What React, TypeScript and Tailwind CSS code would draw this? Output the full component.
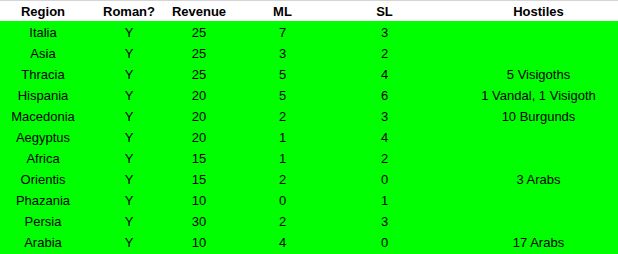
import React from "react";

const rows: [string, string, string, string, string, string][] = [
  ["Italia", "Y", "25", "7", "3", ""],
  ["Asia", "Y", "25", "3", "2", ""],
  ["Thracia", "Y", "25", "5", "4", "5 Visigoths"],
  ["Hispania", "Y", "20", "5", "6", "1 Vandal, 1 Visigoth"],
  ["Macedonia", "Y", "20", "2", "3", "10 Burgunds"],
  ["Aegyptus", "Y", "20", "1", "4", ""],
  ["Africa", "Y", "15", "1", "2", ""],
  ["Orientis", "Y", "15", "2", "0", "3 Arabs"],
  ["Phazania", "Y", "10", "0", "1", ""],
  ["Persia", "Y", "30", "2", "3", ""],
  ["Arabia", "Y", "10", "4", "0", "17 Arabs"],
];

const headers = ["Region", "Roman?", "Revenue", "ML", "SL", "Hostiles"];
const cols = "grid grid-cols-[86px_86px_54px_113px_91px_217px]";

export default function App() {
  return (
    <div
      className="w-[618px] h-[254px] overflow-hidden bg-[#00ff00] text-[13px] leading-none text-black"
      style={{ fontFamily: '"Liberation Sans", Arial, sans-serif' }}
    >
      <div className="w-[647px]">
        <div className={`${cols} h-[21px] bg-white border-t border-[#d4d4d4] font-bold`}>
          {headers.map((h) => (
            <div key={h} className="flex items-center justify-center">
              {h}
            </div>
          ))}
        </div>
        {rows.map((r) => (
          <div key={r[0]} className={`${cols} h-[21.1px]`}>
            {r.map((c, i) => (
              <div key={i} className="flex items-center justify-center whitespace-nowrap pt-[1px]">
                {c}
              </div>
            ))}
          </div>
        ))}
      </div>
    </div>
  );
}
